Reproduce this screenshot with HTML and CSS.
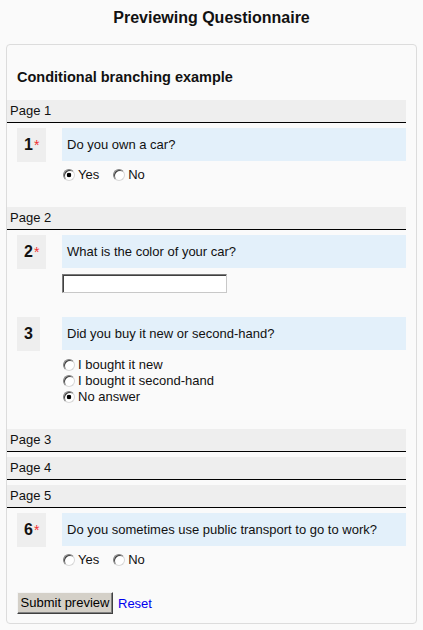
FILE: index.html
```html
<!DOCTYPE html>
<html>
<head>
<meta charset="utf-8">
<title>Previewing Questionnaire</title>
<link rel="stylesheet" href="styles.css">
</head>
<body>
<h1 class="title">Previewing Questionnaire</h1>
<div class="box">
  <h2 class="survey-name">Conditional branching example</h2>

  <div class="page">
    <div class="page-bar">Page 1</div>
    <div class="question">
      <div class="num">1<span class="req">*</span></div>
      <div class="content">
        <div class="qtext">Do you own a car?</div>
        <div class="answer inline">
          <label class="opt"><span class="radio checked"></span>Yes</label>
          <label class="opt"><span class="radio"></span>No</label>
        </div>
      </div>
    </div>
  </div>

  <div class="page">
    <div class="page-bar">Page 2</div>
    <div class="question">
      <div class="num">2<span class="req">*</span></div>
      <div class="content">
        <div class="qtext">What is the color of your car?</div>
        <div class="textbox"></div>
      </div>
    </div>
    <div class="question">
      <div class="num">3</div>
      <div class="content">
        <div class="qtext">Did you buy it new or second-hand?</div>
        <div class="answer list">
          <label class="opt block"><span class="radio"></span>I bought it new</label>
          <label class="opt block"><span class="radio"></span>I bought it second-hand</label>
          <label class="opt block"><span class="radio checked"></span>No answer</label>
        </div>
      </div>
    </div>
  </div>

  <div class="page">
    <div class="page-bar">Page 3</div>
  </div>
  <div class="page">
    <div class="page-bar">Page 4</div>
  </div>

  <div class="page">
    <div class="page-bar">Page 5</div>
    <div class="question">
      <div class="num">6<span class="req">*</span></div>
      <div class="content">
        <div class="qtext">Do you sometimes use public transport to go to work?</div>
        <div class="answer inline">
          <label class="opt"><span class="radio"></span>Yes</label>
          <label class="opt"><span class="radio"></span>No</label>
        </div>
      </div>
    </div>
  </div>

  <div class="actions">
    <span class="button">Submit preview</span>
    <a class="reset" href="#">Reset</a>
  </div>
</div>
</body>
</html>
```

FILE: styles.css
```css
html, body {
  margin: 0;
  padding: 0;
  background: #fafafa;
}
body {
  font-family: "Liberation Sans", Arial, sans-serif;
  font-size: 13px;
  color: #111;
}
.title {
  margin: 9px 0 17px;
  font-size: 16px;
  line-height: 18px;
  font-weight: bold;
  text-align: center;
}
.box {
  margin-left: 6px;
  width: 399px;
  padding: 0 10px 9px 0;
  border: 1px solid #dcdcdc;
  border-radius: 4px;
  background: #fafafa;
}
.survey-name {
  margin: 0 0 15px 10px;
  padding-top: 24px;
  font-size: 14.5px;
  line-height: 16px;
  font-weight: bold;
}
.page {
  margin-bottom: 5px;
}
.page-bar {
  height: 22px;
  line-height: 22px;
  padding-left: 3px;
  background: #eeeeee;
  border-bottom: 1px solid #000;
}
.question {
  display: grid;
  grid-template-columns: 45px 1fr;
  padding: 5px 0 19px 10px;
}
.num {
  justify-self: start;
  height: 34px;
  line-height: 34px;
  padding: 0 7px;
  background: #eeeeee;
  font-size: 16px;
  font-weight: bold;
}
.req {
  color: #f03030;
  font-size: 14px;
  font-weight: normal;
  margin-left: 1px;
}
.qtext {
  height: 33px;
  line-height: 33px;
  padding-left: 5px;
  background: #e3f0fa;
}
.answer {
  line-height: 16px;
}
.answer.inline {
  display: flex;
  margin-top: 6px;
}
.answer.list {
  margin-top: 7px;
}
.opt {
  display: flex;
  align-items: center;
  height: 16px;
  margin-right: 13px;
}
.opt.block {
  margin-right: 0;
}
.radio {
  box-sizing: border-box;
  width: 12px;
  height: 12px;
  margin: -1px 3px 0 1px;
  border-radius: 50%;
  border: 1px solid;
  border-color: #808080 #d8d8d8 #d8d8d8 #808080;
  background: #fff;
  box-shadow: inset 1px 1px 0 #404040;
}
.radio.checked {
  background: radial-gradient(circle, #000 0 2px, #fff 2.6px);
}
.textbox {
  box-sizing: border-box;
  width: 165px;
  height: 19px;
  margin-top: 6px;
  background: #fff;
  border: 1px solid;
  border-color: #7a7a7a #c8c8c8 #c8c8c8 #7a7a7a;
  box-shadow: inset 1px 1px 0 #404040;
}
.actions {
  display: flex;
  align-items: center;
  padding-left: 10px;
}
.button {
  box-sizing: border-box;
  width: 96px;
  height: 22px;
  line-height: 20px;
  text-align: center;
  white-space: nowrap;
  background: #d4d0c8;
  border: 1px solid;
  border-color: #f4f4f4 #404040 #404040 #f4f4f4;
  box-shadow: inset -1px -1px 0 #808080;
  color: #000;
}
.reset {
  margin-left: 5px;
  color: #0000ee;
  text-decoration: none;
}
```
